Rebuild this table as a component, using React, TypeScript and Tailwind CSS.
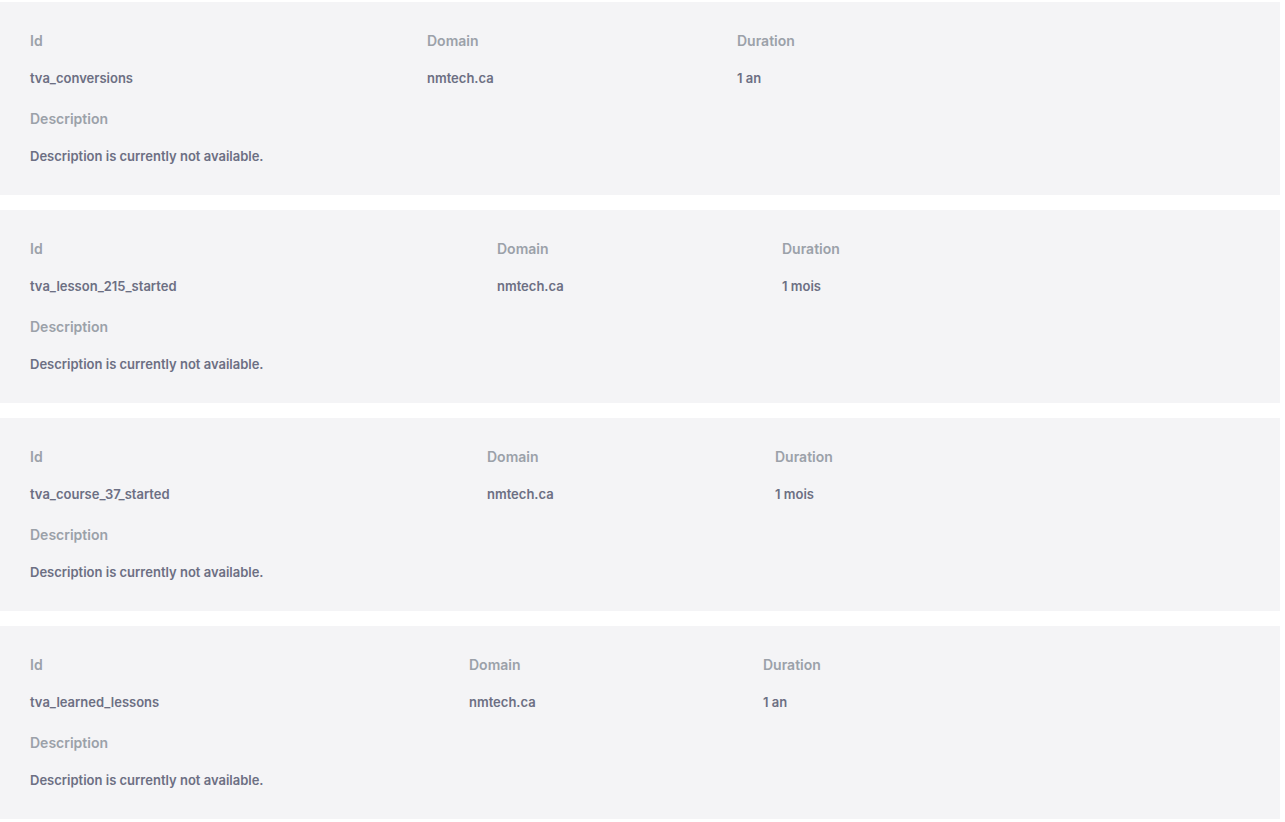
const cookies = [
  { id: "tva_conversions", domain: "nmtech.ca", duration: "1 an", cols: "grid-cols-[397px_310px_1fr]" },
  { id: "tva_lesson_215_started", domain: "nmtech.ca", duration: "1 mois", cols: "grid-cols-[467px_285px_1fr]" },
  { id: "tva_course_37_started", domain: "nmtech.ca", duration: "1 mois", cols: "grid-cols-[457px_288px_1fr]" },
  { id: "tva_learned_lessons", domain: "nmtech.ca", duration: "1 an", cols: "grid-cols-[439px_294px_1fr]" },
];

export default function App() {
  return (
    <div className="min-h-screen bg-white pt-[2px] font-['Inter',sans-serif]">
      <div className="flex w-[1280px] flex-col gap-[15px]">
        {cookies.map((c) => (
          <div key={c.id} className="h-[193px] bg-[#f4f4f6] px-[30px] pt-[29px]">
            <div className={`grid ${c.cols}`}>
              <div className="h-[20px] text-[14px] font-semibold leading-[20px] text-[#9ba1a9]">Id</div>
              <div className="h-[20px] text-[14px] font-semibold leading-[20px] text-[#9ba1a9]">Domain</div>
              <div className="h-[20px] text-[14px] font-semibold leading-[20px] text-[#9ba1a9]">Duration</div>
              <div className="mt-[17px] h-[20px] text-[13px] font-semibold leading-[20px] text-[#6c6f83]">{c.id}</div>
              <div className="mt-[17px] h-[20px] text-[13px] font-semibold leading-[20px] text-[#6c6f83]">{c.domain}</div>
              <div className="mt-[17px] h-[20px] text-[13px] font-semibold leading-[20px] text-[#6c6f83]">{c.duration}</div>
            </div>
            <div className="mt-[21px] h-[20px] text-[14px] font-semibold leading-[20px] text-[#9ba1a9]">Description</div>
            <div className="mt-[17px] h-[20px] text-[13px] font-semibold leading-[20px] text-[#6c6f83]">
              Description is currently not available.
            </div>
          </div>
        ))}
      </div>
    </div>
  );
}
